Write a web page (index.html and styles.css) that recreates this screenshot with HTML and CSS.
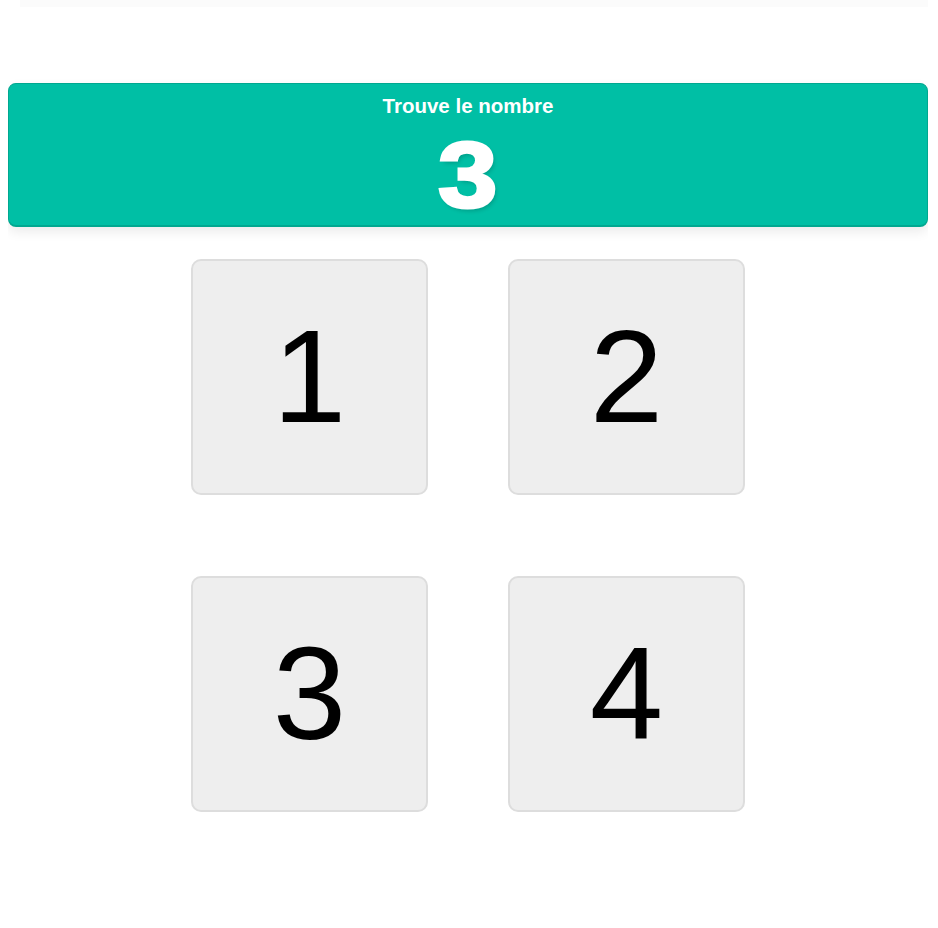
FILE: index.html
```html
<!DOCTYPE html>
<html lang="fr">
<head>
<meta charset="utf-8">
<title>Trouve le nombre</title>
<link rel="stylesheet" href="styles.css">
</head>
<body>
<div class="topbar"></div>
<header class="target">
  <div class="target-label">Trouve le nombre</div>
  <div class="target-number"><span class="target-digit">3</span></div>
</header>
<main class="grid">
  <button class="card">1</button>
  <button class="card">2</button>
  <button class="card">3</button>
  <button class="card">4</button>
</main>
</body>
</html>
```
FILE: styles.css
```css
html, body {
  background: #ffffff;
}
body {
  margin: 0 10px 0 8px;
  font-family: "Liberation Sans", Arial, sans-serif;
}
.topbar {
  height: 7px;
  margin-left: 12px;
  margin-right: -10px;
  background: #fbfbfb;
  margin-bottom: 76px;
}
.target {
  box-sizing: border-box;
  height: 144px;
  background: #00bfa5;
  border: 1px solid #00a890;
  border-bottom-width: 2px;
  border-radius: 8px;
  box-shadow: 0 5px 12px rgba(0, 0, 0, 0.08);
  color: #ffffff;
  text-align: center;
  padding-top: 10px;
}
.target-label {
  font-size: 20.5px;
  font-weight: bold;
  line-height: 24px;
}
.target-number {
  font-size: 92px;
  font-weight: bold;
  line-height: 100px;
  margin-top: 7px;
}
.target-digit {
  display: inline-block;
  transform: scaleX(1.16);
  -webkit-text-stroke: 3px #ffffff;
  text-shadow: 2px 3px 4px rgba(0, 0, 0, 0.18);
}
.grid {
  display: grid;
  grid-template-columns: 237px 237px;
  grid-auto-rows: 236px;
  column-gap: 80px;
  row-gap: 81px;
  justify-content: center;
  margin-top: 32px;
}
.card {
  box-sizing: border-box;
  background: #eeeeee;
  border: 2px solid #dddddd;
  border-radius: 10px;
  font-family: "Liberation Sans", Arial, sans-serif;
  font-size: 132px;
  color: #000000;
  padding: 0;
  display: flex;
  align-items: center;
  justify-content: center;
  line-height: 1;
}
```
